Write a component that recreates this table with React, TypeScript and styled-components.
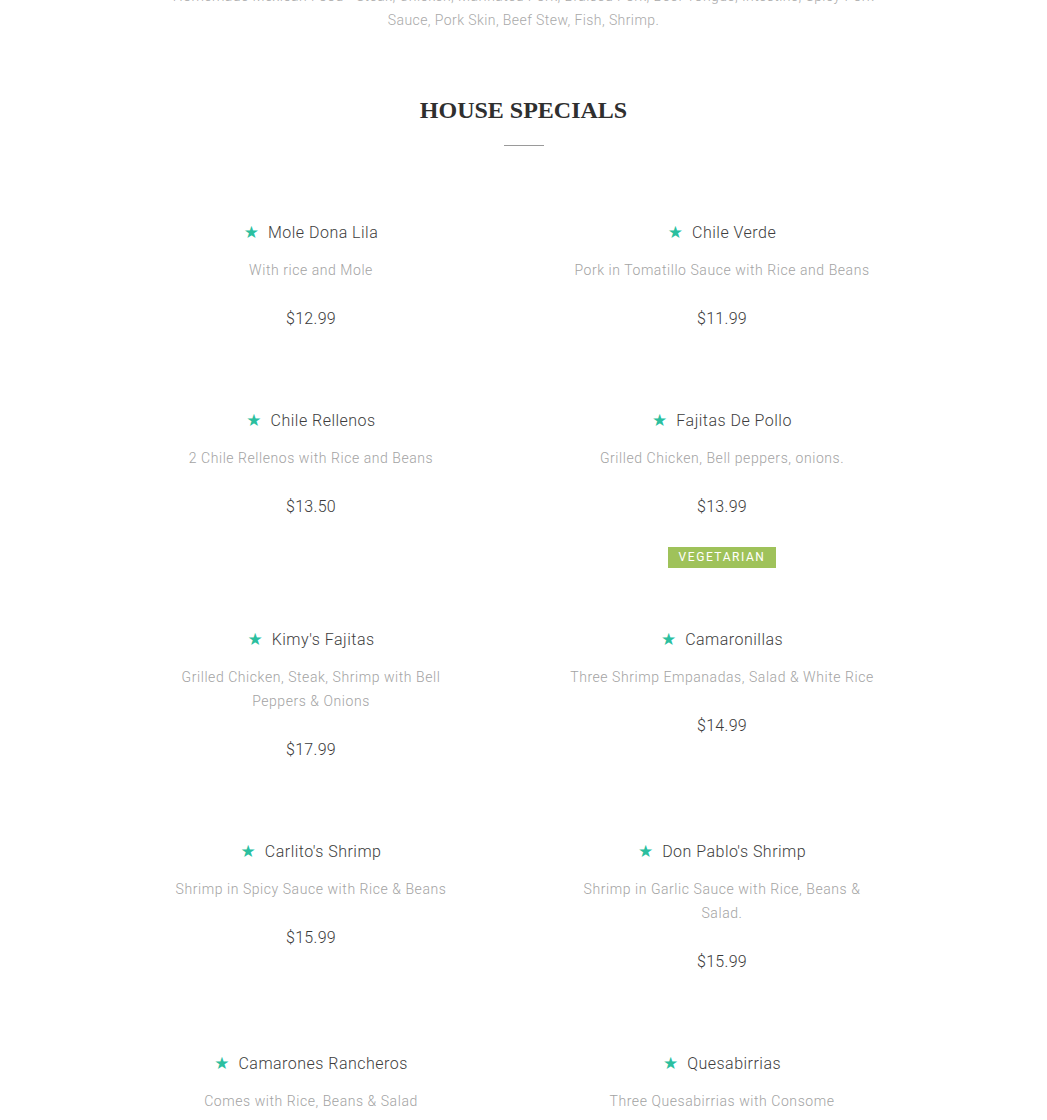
import React from 'react'
import styled, { createGlobalStyle } from 'styled-components'

const GlobalStyle = createGlobalStyle`
  body {
    margin: 0;
    background: #fff;
    font-family: Roboto, "Open Sans", sans-serif;
  }
`

const Page = styled.div`
  display: flex;
  flex-direction: column;
  align-items: center;
  margin-top: -16px;
`

const Intro = styled.p`
  max-width: 720px;
  margin: 0;
  text-align: center;
  font-size: 14px;
  font-weight: 300;
  line-height: 24px;
  letter-spacing: 0.03em;
  color: #a9a9a9;
`

const Heading = styled.h2`
  margin: 61px 0 0;
  font-family: "Liberation Serif", serif;
  font-weight: bold;
  font-size: 24px;
  line-height: 34px;
  color: #2f2f2f;
`

const Divider = styled.hr`
  width: 40px;
  margin: 18px 0 0;
  border: 0;
  border-top: 1px solid #9a9a9a;
`

const Menu = styled.div`
  display: grid;
  grid-template-columns: 411px 411px;
  row-gap: 78px;
  margin-top: 75px;
  padding-right: 14px;
`

const Item = styled.div`
  display: flex;
  flex-direction: column;
  align-items: center;
  text-align: center;
`

const TitleRow = styled.div`
  display: flex;
  align-items: center;
  gap: 9px;
  line-height: 24px;
`

const Star = styled.span`
  color: #2bbf9f;
  font-size: 17px;
  font-family: "DejaVu Sans", sans-serif;
  transform: translateY(-1px);
`

const Title = styled.span`
  font-size: 16px;
  font-weight: 300;
  letter-spacing: 0.03em;
  color: #3d3d3d;
`

const Desc = styled.p`
  max-width: 310px;
  margin: 13px 0 0;
  font-size: 14px;
  font-weight: 300;
  line-height: 24px;
  letter-spacing: 0.04em;
  color: #a3a3a3;
`

const Price = styled.div`
  margin-top: 25px;
  font-size: 16px;
  font-weight: 300;
  line-height: 24px;
  letter-spacing: 0.02em;
  color: #3a3a3a;
`

const Badge = styled.span`
  margin: 28px 0 -18px;
  padding: 0 11px;
  height: 21px;
  line-height: 21px;
  background: #9fc25a;
  color: #fff;
  font-size: 12px;
  font-weight: 400;
  letter-spacing: 0.13em;
`

interface Dish {
  name: string
  desc: string
  price: string
  tag?: string
}

const dishes: Dish[] = [
  { name: 'Mole Dona Lila', desc: 'With rice and Mole', price: '$12.99' },
  { name: 'Chile Verde', desc: 'Pork in Tomatillo Sauce with Rice and Beans', price: '$11.99' },
  { name: 'Chile Rellenos', desc: '2 Chile Rellenos with Rice and Beans', price: '$13.50' },
  { name: 'Fajitas De Pollo', desc: 'Grilled Chicken, Bell peppers, onions.', price: '$13.99', tag: 'VEGETARIAN' },
  { name: "Kimy's Fajitas", desc: 'Grilled Chicken, Steak, Shrimp with Bell Peppers & Onions', price: '$17.99' },
  { name: 'Camaronillas', desc: 'Three Shrimp Empanadas, Salad & White Rice', price: '$14.99' },
  { name: "Carlito's Shrimp", desc: 'Shrimp in Spicy Sauce with Rice & Beans', price: '$15.99' },
  { name: "Don Pablo's Shrimp", desc: 'Shrimp in Garlic Sauce with Rice, Beans & Salad.', price: '$15.99' },
  { name: 'Camarones Rancheros', desc: 'Comes with Rice, Beans & Salad', price: '$16.99' },
  { name: 'Quesabirrias', desc: 'Three Quesabirrias with Consome', price: '$15.99' },
]

const App: React.FC = () => {
  return (
    <>
      <GlobalStyle />
      <Page>
        <Intro>
          Homemade Mexican Food - Steak, Chicken, Marinated Pork, Braised Pork, Beef Tongue, Intestine, Spicy Pork
          Sauce, Pork Skin, Beef Stew, Fish, Shrimp.
        </Intro>
        <Heading>HOUSE SPECIALS</Heading>
        <Divider />
        <Menu>
          {dishes.map((d) => (
            <Item key={d.name}>
              <TitleRow>
                <Star>★</Star>
                <Title>{d.name}</Title>
              </TitleRow>
              <Desc>{d.desc}</Desc>
              <Price>{d.price}</Price>
              {d.tag && <Badge>{d.tag}</Badge>}
            </Item>
          ))}
        </Menu>
      </Page>
    </>
  )
}

export default App
